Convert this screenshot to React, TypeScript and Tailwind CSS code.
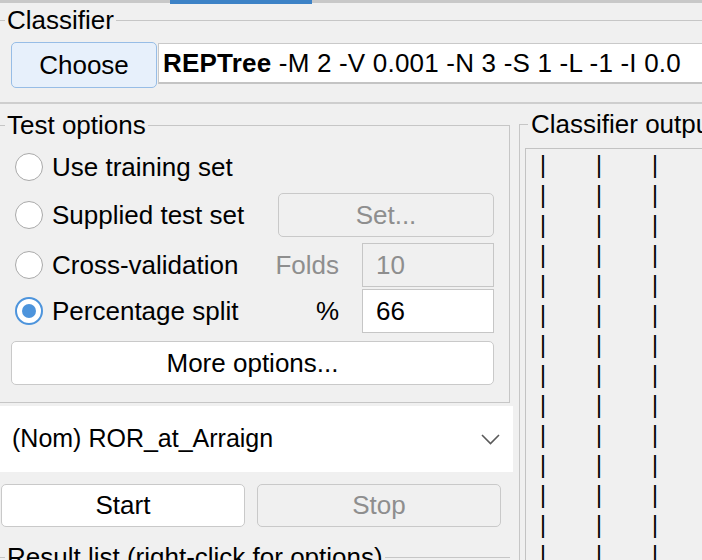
const font = "font-['Liberation_Sans',Arial,sans-serif]";

const Radio = ({ checked, label }: { checked?: boolean; label: string }) => (
  <div className="flex items-center">
    {checked ? (
      <div className="w-[28px] h-[28px] rounded-full border-2 border-[#4d94dc] bg-white flex items-center justify-center">
        <div className="w-[14px] h-[14px] rounded-full bg-[#4d94dc]" />
      </div>
    ) : (
      <div className="w-[28px] h-[28px] rounded-full border-[1.5px] border-[#a9a9a9] bg-white" />
    )}
    <span className="ml-[9px]">{label}</span>
  </div>
);

const Btn = ({ label, disabled, className = "" }) => (
  <div
    className={`h-[44px] rounded-[5px] border-[1.5px] border-[#c9c9c9] flex items-center justify-center ${
      disabled ? "bg-[#f0f0f0] text-[#8e8e8e]" : "bg-white text-black"
    } ${className}`}
  >
    {label}
  </div>
);

const Field = ({ value, disabled }: { value: string; disabled?: boolean }) => (
  <div
    className={`w-[132px] h-[44px] border-[1.5px] border-[#c6c6c6] flex items-center pl-[13px] ${
      disabled ? "bg-[#f0f0f0] text-[#8e8e8e]" : "bg-white text-black"
    }`}
  >
    {value}
  </div>
);

export default function App() {
  const rows = Array.from({ length: 15 });

  return (
    <div className={`w-[702px] h-[560px] overflow-hidden bg-[#f0f0f0] text-black text-[26px] ${font}`}>
      {/* tab strip */}
      <div className="flex items-start h-[4px]">
        <div className="w-[170px] h-[3px] bg-[#c8c8c8]" />
        <div className="w-[142px] h-[4px] bg-[#3d82c6]" />
        <div className="flex-1 h-[3px] bg-[#c8c8c8]" />
      </div>

      {/* Classifier */}
      <div className="mt-[2px] flex items-center h-[28px] leading-[28px]">
        <div className="w-[5px] h-px bg-[#c6c6c6]" />
        <span className="px-[2px]">Classifier</span>
        <div className="flex-1 h-px bg-[#c6c6c6]" />
      </div>
      <div className="mt-[8px] flex items-start pl-[11px]">
        <div className="w-[146px] h-[46px] rounded-[5px] border-[1.5px] border-[#97bde6] bg-[#e7f0fb] flex items-center justify-center">
          Choose
        </div>
        <div className="ml-[1px] mt-[1px] flex-1 h-[41px] bg-white border-l border-t border-[#c9c9c9] border-b-2 border-b-[#c4c4c4] flex items-center pl-[4px] whitespace-nowrap overflow-hidden tracking-[0.2px]">
          <b>REPTree</b>&nbsp;-M 2 -V 0.001 -N 3 -S 1 -L -1 -I 0.0
        </div>
      </div>
      <div className="mt-[14px] h-[2px] bg-[#cecece]" />

      <div className="flex">
        {/* left column */}
        <div className="w-[514px] flex flex-col">
          <fieldset className="mt-[7px] w-[510px] border-t border-r border-b border-[#c6c6c6]">
            <legend className="ml-[5px] px-[2px] leading-[28px]">Test options</legend>
            <div className="pl-[15px] pr-[15px] pb-[17px]">
              <div className="mt-[6px] h-[44px] flex items-center">
                <Radio label="Use training set" />
              </div>
              <div className="mt-[4px] h-[44px] flex items-center justify-between">
                <Radio label="Supplied test set" />
                <Btn label="Set..." disabled className="w-[216px]" />
              </div>
              <div className="mt-[6px] h-[44px] flex items-center justify-between">
                <Radio label="Cross-validation" />
                <div className="flex items-center">
                  <span className="text-[#8e8e8e] mr-[23px]">Folds</span>
                  <Field value="10" disabled />
                </div>
              </div>
              <div className="mt-[2px] h-[44px] flex items-center justify-between">
                <Radio checked label="Percentage split" />
                <div className="flex items-center">
                  <span className="mr-[23px]">%</span>
                  <Field value="66" />
                </div>
              </div>
              <Btn label="More options..." className="mt-[8px] -ml-[4px]" />
            </div>
          </fieldset>

          <div className="mt-[3px] w-[513px] h-[66px] bg-white flex items-center justify-between pl-[12px] pr-[13px] text-[25px]">
            <span>(Nom) ROR_at_Arraign</span>
            <svg width="19" height="11" viewBox="0 0 19 11" fill="none">
              <polyline points="1,1 9.5,9.5 18,1" stroke="#5a5a5a" strokeWidth="1.6" />
            </svg>
          </div>

          <div className="mt-[12px] flex gap-[12px] pl-[1px]">
            <Btn label="Start" className="w-[244px] !h-[43px]" />
            <Btn label="Stop" disabled className="w-[244px] !h-[43px]" />
          </div>

          <div className="mt-[16px] w-[510px] flex items-center h-[28px] leading-[28px]">
            <div className="w-[5px] h-px bg-[#c6c6c6]" />
            <span className="px-[2px] whitespace-nowrap">Result list (right-click for options)</span>
            <div className="flex-1 h-px bg-[#c6c6c6]" />
          </div>
        </div>

        {/* right column */}
        <fieldset className="mt-[6px] ml-[5px] flex-1 min-w-0 h-[460px] border-l border-t border-[#c6c6c6]">
          <legend className="ml-[8px] px-[3px] leading-[28px] whitespace-nowrap">Classifier output</legend>
          <div className="ml-[5px] mt-[10px] h-[420px] border-l border-t border-[#c3c3c3] overflow-hidden pl-[10px] pt-[3px]">
            {rows.map((_, i) => (
              <div
                key={i}
                className="font-['Liberation_Mono',monospace] text-[23.33px] leading-[30px] whitespace-pre text-black"
              >
                {"|   |   |   |   |"}
              </div>
            ))}
          </div>
        </fieldset>
      </div>
    </div>
  );
}
